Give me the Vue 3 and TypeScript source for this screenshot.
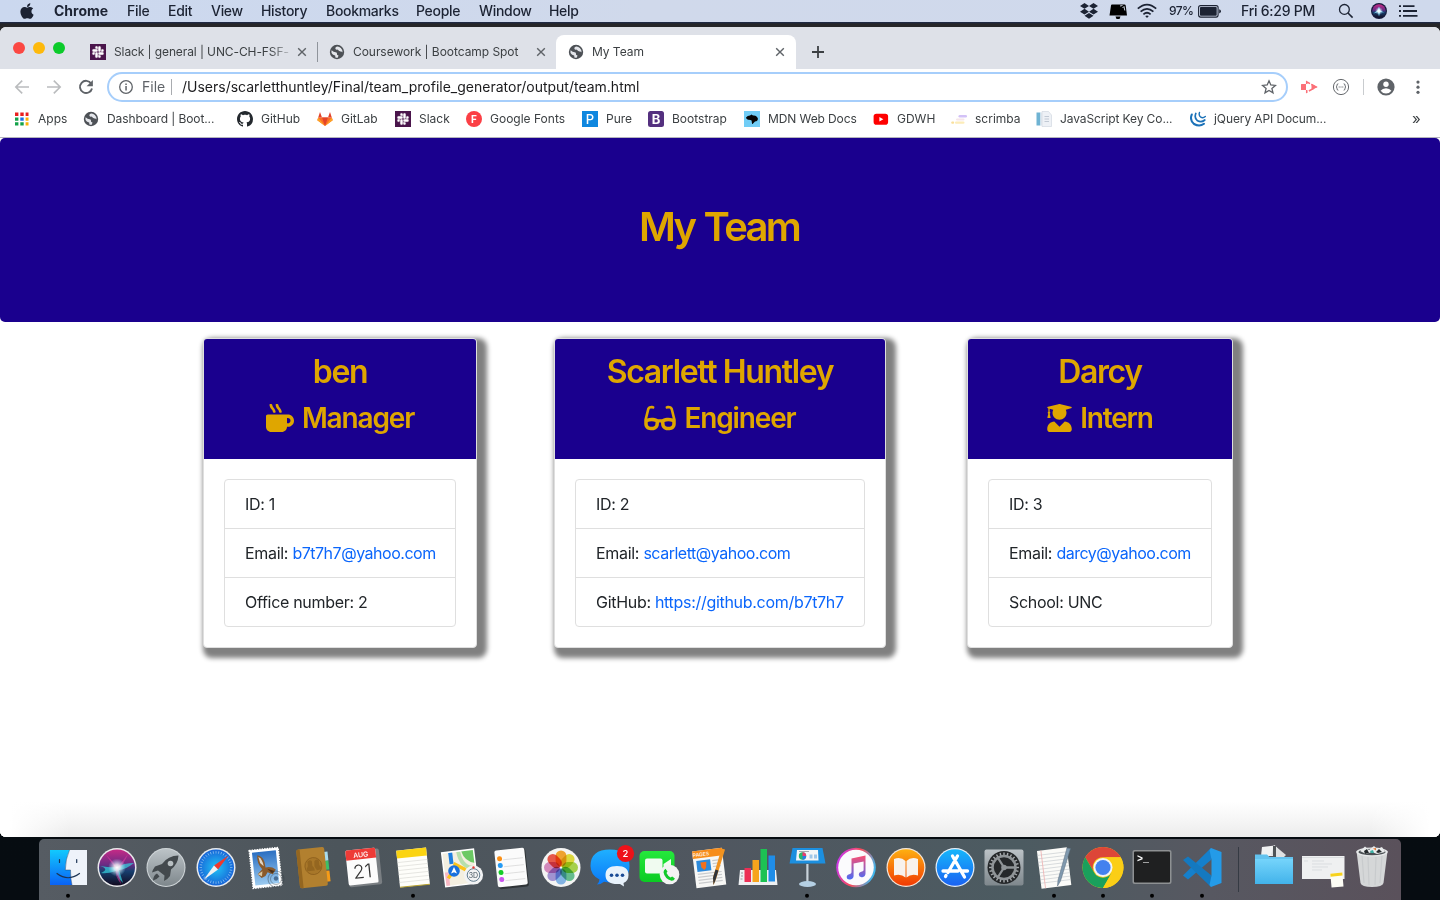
<script setup lang="ts">
interface Row {
  label: string
  value: string
  link?: boolean
}
interface Member {
  key: string
  name: string
  role: string
  viewBox: string
  icon: string
  rows: Row[]
}
interface Entry {
  key: string
  label: string
}

const menus: string[] = ['Chrome', 'File', 'Edit', 'View', 'History', 'Bookmarks', 'People', 'Window', 'Help']

const bookmarks: Entry[] = [
  { key: 'apps', label: 'Apps' },
  { key: 'globe', label: 'Dashboard | Boot...' },
  { key: 'github', label: 'GitHub' },
  { key: 'gitlab', label: 'GitLab' },
  { key: 'slack', label: 'Slack' },
  { key: 'fonts', label: 'Google Fonts' },
  { key: 'pure', label: 'Pure' },
  { key: 'bootstrap', label: 'Bootstrap' },
  { key: 'mdn', label: 'MDN Web Docs' },
  { key: 'youtube', label: 'GDWH' },
  { key: 'scrimba', label: 'scrimba' },
  { key: 'jskey', label: 'JavaScript Key Co...' },
  { key: 'jquery', label: 'jQuery API Docum...' },
]

const members: Member[] = [
  {
    key: 'manager',
    name: 'ben',
    role: 'Manager',
    viewBox: '0 0 512 512',
    icon: 'M127.1 146.5c1.3 7.7 8 13.5 16 13.5h16.5c9.8 0 17.6-8.5 16.3-18-3.8-28.2-16.4-54.2-36.6-74.7-14.4-14.7-23.6-33.3-26.4-53.5C111.8 5.9 105 0 96.8 0H80.4C70.6 0 63 8.5 64.1 18c3.9 31.9 18 61.3 40.6 84.4 12 12.2 19.7 27.5 22.4 44.1zm112 0c1.3 7.7 8 13.5 16 13.5h16.5c9.8 0 17.6-8.5 16.3-18-3.8-28.2-16.4-54.2-36.6-74.7-14.4-14.7-23.6-33.3-26.4-53.5C223.8 5.9 217 0 208.8 0h-16.4c-9.8 0-17.5 8.5-16.3 18 3.9 31.9 18 61.3 40.6 84.4 12 12.2 19.7 27.5 22.4 44.1zM400 192H32c-17.7 0-32 14.3-32 32v192c0 53 43 96 96 96h192c53 0 96-43 96-96h16c61.8 0 112-50.2 112-112s-50.2-112-112-112zm0 160h-16v-96h16c26.5 0 48 21.5 48 48s-21.5 48-48 48z',
    rows: [
      { label: 'ID:', value: '1' },
      { label: 'Email:', value: 'b7t7h7@yahoo.com', link: true },
      { label: 'Office number:', value: '2' },
    ],
  },
  {
    key: 'engineer',
    name: 'Scarlett Huntley',
    role: 'Engineer',
    viewBox: '0 0 576 512',
    icon: 'M574.1 280.37L528.75 98.66c-5.91-23.7-21.59-44.05-43-55.81-21.44-11.73-46.97-14.11-70.19-6.33l-15.25 5.08c-8.39 2.79-12.92 11.86-10.12 20.24l5.06 15.18c2.79 8.38 11.85 12.91 20.23 10.12l13.18-4.39c10.87-3.62 23-3.57 33.16 1.73 10.29 5.37 17.57 14.56 20.37 25.82l38.46 153.82c-22.19-6.81-49.79-12.46-81.2-12.46-34.77 0-73.98 7.02-114.85 26.74h-73.18c-40.87-19.74-80.08-26.75-114.86-26.75-31.42 0-59.02 5.65-81.21 12.46l38.46-153.83c2.79-11.25 10.09-20.45 20.38-25.81 10.16-5.3 22.28-5.35 33.15-1.73l13.17 4.39c8.38 2.79 17.44-1.74 20.23-10.12l5.06-15.18c2.8-8.38-1.73-17.45-10.12-20.24l-15.25-5.08c-23.22-7.78-48.75-5.41-70.19 6.33-21.41 11.77-37.09 32.11-43 55.8L1.9 280.37A64.218 64.218 0 0 0 0 295.86v70.25C0 429.01 51.58 480 115.2 480h37.12c60.28 0 110.37-45.94 114.88-105.37l2.93-38.63h35.75l2.93 38.63C313.31 434.06 363.4 480 423.68 480h37.12c63.62 0 115.2-50.99 115.2-113.88v-70.25c0-5.23-.64-10.43-1.9-15.5zm-370.72 89.42c-1.97 25.91-24.4 46.21-51.06 46.21H115.2C86.97 416 64 393.62 64 366.11v-37.54c18.12-6.49 43.42-12.92 72.58-12.92 23.86 0 47.26 4.33 69.93 12.92l-3.13 41.22zM512 366.12c0 27.51-22.97 49.88-51.2 49.88h-37.12c-26.67 0-49.1-20.3-51.06-46.21l-3.13-41.22c22.67-8.59 46.08-12.92 69.95-12.92 29.12 0 54.43 6.44 72.55 12.93v37.54z',
    rows: [
      { label: 'ID:', value: '2' },
      { label: 'Email:', value: 'scarlett@yahoo.com', link: true },
      { label: 'GitHub:', value: 'https://github.com/b7t7h7', link: true },
    ],
  },
  {
    key: 'intern',
    name: 'Darcy',
    role: 'Intern',
    viewBox: '0 0 448 512',
    icon: 'M319.4 320.6L224 416l-95.4-95.4C57.1 323.7 0 382.2 0 454.4v9.6c0 26.5 21.5 48 48 48h352c26.5 0 48-21.5 48-48v-9.6c0-72.2-57.1-130.7-128.6-133.8zM13.6 79.8l6.4 1.5v58.4c-7 4.2-12 11.5-12 20.3 0 8.4 4.6 15.4 11.1 19.7L3.5 242c-1.7 6.9 2.1 14 7.6 14h41.8c5.5 0 9.3-7.1 7.6-14l-15.6-62.3C51.4 175.4 56 168.4 56 160c0-8.8-5-16.1-12-20.3V87.1l66 15.9c-8.6 17.2-14 36.4-14 57 0 70.7 57.3 128 128 128s128-57.3 128-128c0-20.6-5.3-39.8-14-57l96.3-23.2c18.2-4.4 18.2-27.1 0-31.5l-190.4-46c-13-3.1-26.7-3.1-39.7 0L13.6 48.2c-18.1 4.4-18.1 27.1 0 31.6z',
    rows: [
      { label: 'ID:', value: '3' },
      { label: 'Email:', value: 'darcy@yahoo.com', link: true },
      { label: 'School:', value: 'UNC' },
    ],
  },
]

const ticks: number[] = Array.from({ length: 36 }, (_, i) => i * 10)
const teeth: number[] = Array.from({ length: 24 }, (_, i) => i * 15)
const petals: { angle: number; color: string }[] = [
  { angle: 0, color: '#f9a01b' },
  { angle: 45, color: '#e4df2b' },
  { angle: 90, color: '#a5d63c' },
  { angle: 135, color: '#58bf8a' },
  { angle: 180, color: '#7bb4ee' },
  { angle: 225, color: '#9f8fd8' },
  { angle: 270, color: '#d884c0' },
  { angle: 315, color: '#f04a3c' },
]
</script>

<template>
  <div class="desktop">
    <svg class="defs" width="0" height="0" aria-hidden="true">
      <defs>
        <symbol id="globe" viewBox="0 0 16 16">
          <circle cx="8" cy="8" r="7.2" fill="#4d5156" />
          <path d="M2.6 6.2 Q4.6 8.2 6.6 8.2 Q8.4 8.3 8 10 Q7.6 11.2 9.4 11.2 L9 13.4 Q7.6 14 6.4 13.6 L6.2 11.4 Q2.8 10.6 2.4 8.2Z M8.6 2.4 Q6 2.8 6.4 4.8 Q7 6.2 8.8 5.6 Q9.6 7.4 11.4 7.4 Q13 7.2 13.6 8.6 Q13.8 5.6 11.8 3.9 Q10.4 2.6 8.6 2.4Z" fill="#e4e6eb" />
        </symbol>
        <symbol id="slack" viewBox="-5 -5 34 34">
          <rect x="-5" y="-5" width="34" height="34" fill="#4a154b" />
          <path fill="#fff" stroke="#fff" stroke-width=".5" d="M5.042 15.165a2.528 2.528 0 0 1-2.52 2.523A2.528 2.528 0 0 1 0 15.165a2.527 2.527 0 0 1 2.522-2.52h2.520v2.520zM6.313 15.165a2.527 2.527 0 0 1 2.521-2.520 2.527 2.527 0 0 1 2.521 2.520v6.313A2.528 2.528 0 0 1 8.834 24a2.528 2.528 0 0 1-2.521-2.522v-6.313zM8.834 5.042a2.528 2.528 0 0 1-2.521-2.520A2.528 2.528 0 0 1 8.834 0a2.528 2.528 0 0 1 2.521 2.522v2.520H8.834zM8.834 6.313a2.528 2.528 0 0 1 2.521 2.521 2.528 2.528 0 0 1-2.521 2.521H2.522A2.528 2.528 0 0 1 0 8.834a2.528 2.528 0 0 1 2.522-2.521h6.312zM18.956 8.834a2.528 2.528 0 0 1 2.522-2.521A2.528 2.528 0 0 1 24 8.834a2.528 2.528 0 0 1-2.522 2.521h-2.522V8.834zM17.688 8.834a2.528 2.528 0 0 1-2.523 2.521 2.527 2.527 0 0 1-2.520-2.521V2.522A2.527 2.527 0 0 1 15.165 0a2.528 2.528 0 0 1 2.523 2.522v6.312zM15.165 18.956a2.528 2.528 0 0 1 2.523 2.522A2.528 2.528 0 0 1 15.165 24a2.527 2.527 0 0 1-2.520-2.522v-2.522h2.520zM15.165 17.688a2.527 2.527 0 0 1-2.520-2.523 2.526 2.526 0 0 1 2.520-2.520h6.313A2.527 2.527 0 0 1 24 15.165a2.528 2.528 0 0 1-2.522 2.523h-6.313z" />
        </symbol>
        <symbol id="close" viewBox="0 0 10 10">
          <path d="M1.2 1.2L8.8 8.8M8.8 1.2L1.2 8.8" stroke="#5f6368" stroke-width="1.4" />
        </symbol>
        <linearGradient id="gFinder" x1="0" y1="0" x2="0" y2="1"><stop offset="0" stop-color="#12c9fd" /><stop offset="1" stop-color="#0a62f5" /></linearGradient>
        <linearGradient id="gGrey" x1="0" y1="0" x2="0" y2="1"><stop offset="0" stop-color="#bcc3c7" /><stop offset="1" stop-color="#7e878c" /></linearGradient>
        <radialGradient id="gSafari"><stop offset="0" stop-color="#22c3f5" /><stop offset="1" stop-color="#1766d8" /></radialGradient>
        <linearGradient id="gSky" x1="0" y1="0" x2="0" y2="1"><stop offset="0" stop-color="#2b6fc2" /><stop offset="1" stop-color="#9ccbf0" /></linearGradient>
        <linearGradient id="gSiri" x1="0" y1="0" x2="0" y2="1"><stop offset="0" stop-color="#c62a86" /><stop offset=".42" stop-color="#6a2b84" /><stop offset=".6" stop-color="#173f6e" /><stop offset="1" stop-color="#120a20" /></linearGradient>
        <radialGradient id="gGlow"><stop offset="0" stop-color="#fff" /><stop offset=".35" stop-color="#fff" stop-opacity=".75" /><stop offset="1" stop-color="#9fe8ff" stop-opacity="0" /></radialGradient>
        <linearGradient id="gBubble" x1="0" y1="0" x2="0" y2="1"><stop offset="0" stop-color="#1fb0ff" /><stop offset="1" stop-color="#0a78f8" /></linearGradient>
        <linearGradient id="gGreen" x1="0" y1="0" x2="0" y2="1"><stop offset="0" stop-color="#25e83c" /><stop offset="1" stop-color="#0bcb23" /></linearGradient>
        <linearGradient id="gBooks" x1="0" y1="0" x2="0" y2="1"><stop offset="0" stop-color="#feb010" /><stop offset="1" stop-color="#f13a04" /></linearGradient>
        <linearGradient id="gStore" x1="0" y1="0" x2="0" y2="1"><stop offset="0" stop-color="#16b6fb" /><stop offset="1" stop-color="#1a62f2" /></linearGradient>
        <linearGradient id="gNote" x1="0" y1="0" x2="0" y2="1"><stop offset="0" stop-color="#fb4e72" /><stop offset="1" stop-color="#4b6cf5" /></linearGradient>
        <linearGradient id="gRing" x1="0" y1=".3" x2="1" y2=".6"><stop offset="0" stop-color="#c536f6" /><stop offset=".5" stop-color="#fb4a58" /><stop offset="1" stop-color="#34bff8" /></linearGradient>
        <linearGradient id="gFolder" x1="0" y1="0" x2="0" y2="1"><stop offset="0" stop-color="#75d4fb" /><stop offset="1" stop-color="#42b3ea" /></linearGradient>
      </defs>
    </svg>

    <header class="menubar">
      <svg class="apple" viewBox="0 0 384 512"><path fill="#1c2333" d="M318.7 268.7c-.2-36.7 16.4-64.4 50-84.8-18.8-26.9-47.2-41.7-84.7-44.6-35.5-2.8-74.3 20.7-88.5 20.7-15 0-49.4-19.7-76.4-19.7C63.3 141.2 4 184.8 4 273.5q0 39.3 14.4 81.2c12.8 36.7 59 126.7 107.2 125.2 25.2-.6 43-17.9 75.8-17.9 31.8 0 48.3 17.9 76.4 17.9 48.6-.7 90.4-82.5 102.6-119.3-65.2-30.7-61.7-90-61.7-91.9zm-56.6-164.2c27.3-32.4 24.8-61.9 24-72.5-24.1 1.4-52 16.4-67.9 34.9-17.5 19.8-27.8 44.3-25.6 71.9 26.1 2 49.9-11.4 69.5-34.3z" /></svg>
      <nav class="menus">
        <span v-for="m in menus" :key="m">{{ m }}</span>
      </nav>
      <div class="status">
        <svg width="20" height="18" viewBox="0 0 20 18" fill="#1c2333"><path d="M5.5 1l4.5 2.9L5.5 6.8 1 3.9zM14.5 1L19 3.9l-4.5 2.9L10 3.9zM5.5 6.8L10 9.7l-4.500 2.900L1 9.700zM14.500 6.800L19 9.700l-4.500 2.900L10 9.700zM10 10.900l4.500 2.900L10 16.700l-4.500-2.900z" /></svg>
        <svg width="20" height="18" viewBox="0 0 20 18"><path d="M4 2.500H16.500Q17.500 2.500 17.700 3.500L19 13.500H1.500L3 3.500Q3.100 2.500 4 2.500Z M7.500 14.500H12.500L11.500 17H8.500Z" fill="#000" /><path d="M12 4l2.500-.5M14.500 6l1.500-1.500 .8 4" stroke="#dfe6f2" stroke-width=".9" fill="none" /></svg>
        <svg width="20" height="16" viewBox="0 0 20 16" fill="none" stroke="#1c2333" stroke-width="1.700"><path d="M.8 5.700Q10-2.500 19.200 5.700M3.600 8.600Q10 3 16.400 8.600M6.400 11.300Q10 8.200 13.600 11.300" /><path d="M8.200 13.100Q10 11.700 11.800 13.100L10 15z" fill="#1c2333" stroke="none" /></svg>
        <span class="pct">97%</span>
        <svg width="24" height="13" viewBox="0 0 24 13"><rect x=".6" y=".6" width="19.500" height="11.500" rx="2" fill="none" stroke="#1c2333" stroke-width="1.100" /><rect x="2" y="2" width="16.700" height="8.700" rx=".8" fill="#1c2333" /><path d="M21.200 4.200Q23 4.800 23 6.300T21.200 8.500z" fill="#1c2333" /></svg>
        <span class="clock">Fri 6:29 PM</span>
        <svg width="16" height="16" viewBox="0 0 16 16" fill="none" stroke="#1c2333"><circle cx="6.400" cy="6.400" r="4.900" stroke-width="1.300" /><path d="M10 10l4.600 4.600" stroke-width="1.600" /></svg>
        <svg width="16" height="16" viewBox="0 0 16 16"><circle cx="8" cy="8" r="8" fill="#151a3c" /><circle cx="8" cy="8" r="6.800" fill="url(#gSiri)" /><path d="M8 3.500L9.300 7.500 13 9.500 9 9 8 13.500 7 9 2.500 10.500 6.500 7.500Z" fill="#7fd8f5" /><circle cx="8" cy="8" r="4" fill="url(#gGlow)" /></svg>
        <svg width="19" height="12" viewBox="0 0 19 12" fill="#1c2333"><path d="M0 .3h2v1.800H0zM4 .3h11.500v1.800H4zM0 5.100h2v1.800H0zM4 5.100h14v1.800H4zM0 9.900h2v1.800H0zM4 9.900h14.500v1.800H4z" /></svg>
      </div>
    </header>

    <main class="window">
      <div class="tabstrip">
        <div class="lights"><i class="red"></i><i class="amber"></i><i class="green"></i></div>
        <div class="tab first">
          <svg width="16" height="16"><use href="#slack" /></svg>
          <span class="title fade">Slack | general | UNC-CH-FSF-</span>
          <svg class="x" width="10" height="10"><use href="#close" /></svg>
        </div>
        <div class="tab second">
          <svg width="16" height="16"><use href="#globe" /></svg>
          <span class="title">Coursework | Bootcamp Spot</span>
          <svg class="x" width="10" height="10"><use href="#close" /></svg>
        </div>
        <div class="tab active">
          <svg width="16" height="16"><use href="#globe" /></svg>
          <span class="title">My Team</span>
          <svg class="x" width="10" height="10"><use href="#close" /></svg>
        </div>
        <svg class="plus" width="12" height="12" viewBox="0 0 12 12"><path d="M6 0V12M0 6H12" stroke="#3c4043" stroke-width="1.800" /></svg>
      </div>

      <div class="toolbar">
        <svg width="16" height="16" viewBox="0 0 16 16" fill="none" stroke="#babcbe" stroke-width="1.600"><path d="M15 8H2M8.200 1.600L1.800 8l6.400 6.400" /></svg>
        <svg width="16" height="16" viewBox="0 0 16 16" fill="none" stroke="#babcbe" stroke-width="1.600"><path d="M1 8H14M7.800 1.600L14.200 8l-6.400 6.400" /></svg>
        <svg width="16" height="16" viewBox="0 0 16 16"><path d="M13.200 4.600A6.100 6.100 0 1 0 14 9.400" fill="none" stroke="#5f6368" stroke-width="1.900" /><path d="M14.900 1v6.300H8.600z" fill="#5f6368" /></svg>
        <div class="omnibox">
          <svg width="16" height="16" viewBox="0 0 16 16"><circle cx="8" cy="8" r="6.300" fill="none" stroke="#5f6368" stroke-width="1.300" /><path d="M7.300 4.500h1.500V6H7.300zM7.300 7.100h1.500v4.300H7.300z" fill="#5f6368" /></svg>
          <span class="scheme">File</span>
          <i class="bar"></i>
          <span class="url">/Users/scarletthuntley/Final/team_profile_generator/output/team.html</span>
          <svg class="star" width="16" height="16" viewBox="0 0 16 16"><path d="M8 1.800l1.800 4.200 4.600.4-3.500 3 1.100 4.500L8 11.500 4 13.900l1.100-4.500-3.500-3 4.600-.4z" fill="none" stroke="#5f6368" stroke-width="1.300" /></svg>
        </div>
        <svg class="ext1" width="18" height="14" viewBox="0 0 18 14"><path d="M1.500 4H6V10H1.500Q1 10 1 9.500V4.500Q1 4 1.500 4Z" fill="#fb7078" /><path d="M6.700 4V1.800L16 7l-9.300 5.200V10" fill="none" stroke="#fb7078" stroke-width="1.500" stroke-dasharray="6 1.500" /><path d="M11.500 3.800L17.500 7 11.500 10.200z" fill="#fb7078" /></svg>
        <svg class="ext2" width="18" height="18" viewBox="0 0 18 18"><circle cx="9" cy="9" r="7.600" fill="none" stroke="#66696d" /><path d="M6.300 5.800Q5 5.800 5 7.200T4 9Q5 9 5 10.600T6.300 12.200M11.700 5.800Q13 5.800 13 7.200T14 9Q13 9 13 10.600T11.700 12.200" fill="none" stroke="#5f6368" stroke-width="1" /><path d="M6.700 9H11.400" stroke="#5f6368" stroke-dasharray="1 .8" /></svg>
        <i class="divider"></i>
        <svg class="avatar" width="18" height="18" viewBox="0 0 18 18"><circle cx="9" cy="9" r="8.600" fill="#5f6368" /><circle cx="9" cy="6.300" r="2.700" fill="#fff" /><path d="M3.600 12.800Q5.500 10.300 9 10.300T14.400 12.800Q12.500 15.600 9 15.600T3.600 12.800Z" fill="#fff" /></svg>
        <svg class="kebab" width="6" height="16" viewBox="0 0 6 16" fill="#5f6368"><circle cx="3" cy="3.100" r="1.600" /><circle cx="3" cy="8.200" r="1.600" /><circle cx="3" cy="13.300" r="1.600" /></svg>
      </div>

      <div class="bookmarks">
        <span v-for="b in bookmarks" :key="b.key" class="bookmark" :class="b.key">
          <svg v-if="b.key === 'apps'" width="16" height="16" viewBox="0 0 16 16">
            <path d="M1 1.500h3.400v3.400H1zM6.300 1.500h3.400v3.400H6.300zM11.600 1.500h2.900v3.400h-2.900z" fill="#ea1f1f" />
            <path d="M1 6.500h3.400v3.200H1z" fill="#14a24a" /><path d="M6.300 6.500h3.400v3.200H6.300z" fill="#1a73e8" /><path d="M11.600 6.500h2.900v3.200h-2.900z" fill="#fbb105" />
            <path d="M1 11.300h3.400v3.200H1zM6.300 11.300h3.400v3.200H6.300z" fill="#14a24a" /><path d="M11.600 11.300h2.900v3.200h-2.900z" fill="#fbb105" />
          </svg>
          <svg v-else-if="b.key === 'globe'" width="16" height="16"><use href="#globe" /></svg>
          <svg v-else-if="b.key === 'github'" width="16" height="16" viewBox="0 0 16 16"><path fill="#24292e" d="M8 0C3.580 0 0 3.580 0 8c0 3.540 2.290 6.530 5.470 7.590.4.070.55-.17.55-.38 0-.19-.01-.82-.01-1.490-2.010.37-2.530-.49-2.690-.94-.09-.23-.48-.94-.82-1.130-.28-.15-.68-.52-.01-.53.63-.01 1.080.58 1.230.82.72 1.210 1.870.87 2.330.66.07-.52.28-.87.51-1.070-1.780-.2-3.640-.89-3.640-3.950 0-.87.31-1.590.82-2.150-.08-.2-.36-1.020.08-2.120 0 0 .67-.21 2.200.82.64-.18 1.320-.27 2-.27s1.360.09 2 .27c1.530-1.040 2.200-.82 2.200-.82.44 1.100.16 1.920.08 2.120.51.56.82 1.270.82 2.150 0 3.070-1.870 3.750-3.650 3.950.29.25.54.73.54 1.480 0 1.070-.01 1.930-.01 2.200 0 .21.15.46.55.38A8.010 8.010 0 0 0 16 8c0-4.420-3.580-8-8-8z" /></svg>
          <svg v-else-if="b.key === 'gitlab'" width="16" height="16" viewBox="0 0 16 16"><path d="M8 15L.3 9.300 1.200 6.500H14.800L15.700 9.300Z" fill="#fc6d26" /><path d="M8 15L1.200 6.500.3 9.300zM8 15l6.800-8.500.9 2.800z" fill="#fca326" /><path d="M1.200 6.500L3 1 5 6.500zM14.800 6.500L13 1 11 6.500zM8 15L5 6.500h6z" fill="#e24329" /></svg>
          <svg v-else-if="b.key === 'slack'" width="16" height="16"><use href="#slack" /></svg>
          <svg v-else-if="b.key === 'fonts'" width="16" height="16" viewBox="0 0 16 16"><circle cx="8" cy="8" r="8" fill="#fb3f45" /><text x="8" y="11.700" class="glyph" font-size="10">F</text></svg>
          <svg v-else-if="b.key === 'pure'" width="16" height="16" viewBox="0 0 16 16"><rect width="16" height="16" fill="#0f87df" /><text x="8" y="12.500" class="glyph light" font-size="13">P</text></svg>
          <svg v-else-if="b.key === 'bootstrap'" width="16" height="16" viewBox="0 0 16 16"><rect width="16" height="16" rx="2.500" fill="#54307f" /><text x="8" y="12.500" class="glyph" font-size="13">B</text></svg>
          <svg v-else-if="b.key === 'mdn'" width="16" height="16" viewBox="0 0 16 16"><rect width="16" height="16" fill="#71cdf6" /><path d="M2 6.500Q3.500 4.500 6 4.500L7.500 3.500 9 4.500Q13 4 14 8 13.500 10.500 11 10.500L8.800 12.800Q8.300 13.500 8 12.500L7.600 9.500Q6 8.500 4 8.800 2 8 2 6.500Z" fill="#050505" /></svg>
          <svg v-else-if="b.key === 'youtube'" width="16" height="16" viewBox="0 0 16 16"><rect x=".6" y="2.700" width="14.500" height="11" rx="2.800" fill="#fe0000" /><path d="M6.400 5.900L10.300 8.200 6.400 10.500z" fill="#fff" /></svg>
          <svg v-else-if="b.key === 'scrimba'" width="16" height="16" viewBox="0 0 16 16"><rect x="7.500" y="4" width="8.500" height="2.600" rx="1.300" fill="#d3c2f7" /><rect x="5" y="7.500" width="8.500" height="2" rx="1" fill="#f6e6ea" /><rect x=".2" y="10.500" width="3" height="2.300" rx="1.100" fill="#f9df9c" /><rect x="4" y="10.500" width="9.500" height="2.300" rx="1.100" fill="#fcecb9" /></svg>
          <svg v-else-if="b.key === 'jskey'" width="16" height="16" viewBox="0 0 16 16"><path d="M.5 1.500h4v13H.5z" fill="#6fb3d3" /><path d="M4.500 1.500H7v13H4.500z" fill="#e3eaf1" /><path d="M6 .5h6.500L15.500 4v11.500H6z" fill="#eef1f6" stroke="#cdd4de" stroke-width=".6" /><path d="M8.500 5.500H13M8.500 8H13M8.500 10.500H13" stroke="#b5bfcb" stroke-width=".8" /></svg>
          <svg v-else width="16" height="16" viewBox="0 0 16 16" fill="none" stroke="#1c72b8" stroke-linecap="round"><path d="M1.800 3.500Q-.6 9 4 13 9.500 16 14 12.800" stroke-width="2" /><path d="M5.800 2.500Q4 7 7.500 9.800 11.500 12 14.800 9" stroke-width="1.700" /><path d="M9.500 1.500Q8.400 4.500 10.800 6.200 13 7.500 15.300 5.500" stroke-width="1.400" /></svg>
          <span>{{ b.label }}</span>
        </span>
        <span class="more">»</span>
      </div>

      <section class="page">
        <div class="hero"><h1>My Team</h1></div>
        <div class="cards">
          <article v-for="m in members" :key="m.key" class="card" :class="m.key">
            <div class="card-head">
              <h2>{{ m.name }}</h2>
              <h3>
                <svg class="role" :class="m.key" :viewBox="m.viewBox"><path :d="m.icon" fill="#dfa600" /></svg>
                <span>{{ m.role }}</span>
              </h3>
            </div>
            <ul>
              <li v-for="r in m.rows" :key="r.label">
                {{ r.label }} <a v-if="r.link" :class="{ mail: r.label === 'Email:' }">{{ r.value }}</a><template v-else>{{ r.value }}</template>
              </li>
            </ul>
          </article>
        </div>
      </section>
    </main>

    <footer class="dock-area">
      <div class="dock">
        <!-- Finder -->
        <svg class="app" viewBox="0 0 50 61">
          <path d="M7 11H44V46H7z" fill="#eef3fa" />
          <path d="M7 11H26.500Q22.500 20 22.300 31H27.500Q27.500 40 29 46H7z" fill="url(#gFinder)" />
          <path d="M26.500 11Q22.500 20 22.300 31H27.500Q27.500 40 29 46" fill="none" stroke="#1c3454" stroke-width=".6" opacity=".7" /><path d="M14 34.500Q25 43 36.500 34.500M16.500 20.500V23.500M33.700 20.500V23.500" fill="none" stroke="#1c3454" stroke-width="1.200" stroke-linecap="round" />
          <circle cx="25" cy="56.800" r="2" fill="#000" />
        </svg>
        <!-- Siri -->
        <svg class="app" viewBox="0 0 50 61">
          <circle cx="25" cy="28.500" r="19.500" fill="#e9eaec" /><circle cx="25" cy="28.500" r="18" fill="url(#gSiri)" />
          <path d="M8 27Q20 29 25 28 32 24 42 24 33 31 27 31L31 44Q25 38 24 32 15 35 9 34 18 30 8 27Z" fill="#35c8d8" opacity=".75" />
          <path d="M14 16Q23 24 25 29L36 15Q31 27 26 30L29 45Q22 36 24 30Z" fill="#e83fa5" opacity=".5" />
          <circle cx="25" cy="28.500" r="9" fill="url(#gGlow)" />
        </svg>
        <!-- Launchpad -->
        <svg class="app" viewBox="0 0 50 61">
          <circle cx="25" cy="28.500" r="19.500" fill="#cfd5d8" /><circle cx="25" cy="28.500" r="18.500" fill="url(#gGrey)" />
          <path d="M37.500 16.500Q27 16.500 21 25L14 27.500Q11.500 31 11 33.500L17 31.500 23.500 36.500 23 42Q27 40 29 37L30 30.500Q37 25 37.500 16.500ZM16 34.500Q12.500 36 12 41.500 16 40.500 18.500 37.500Z" fill="#43494d" /><circle cx="29.500" cy="24.500" r="2.800" fill="#b8bfc2" />
        </svg>
        <!-- Safari -->
        <svg class="app" viewBox="0 0 50 61">
          <circle cx="25" cy="28.500" r="19.500" fill="#e8ebee" /><circle cx="25" cy="28.500" r="18" fill="url(#gSafari)" />
          <path v-for="t in ticks" :key="t" d="M25 12V14.500" stroke="#c3e4fb" stroke-width=".5" :transform="`rotate(${t} 25 28.500)`" />
          <path d="M37.500 16.500L23 26.500 27 30.500Z" fill="#f0382c" /><path d="M12.500 41L23 26.500 27 30.500Z" fill="#f1f1f1" />
        </svg>
        <!-- Mail -->
        <svg class="app" viewBox="0 0 50 61">
          <g transform="rotate(-6 25 28)">
            <rect x="11" y="10" width="29" height="38" fill="#fff" stroke="#fff" stroke-width="1.500" stroke-dasharray="1.500 1" /><rect x="13.500" y="12.500" width="24" height="33" fill="url(#gSky)" />
            <path d="M18.500 15.500Q24 17 25 23L25.500 28.500Q31 27.500 35.500 31.500L32 36 27 33.500 24.500 37 20.500 38.500 17 34.500 22 30Q17 23 18.500 15.500Z" fill="#8a5a2b" /><path d="M19.500 17Q23.500 20 23.800 27L20.500 23.500Z" fill="#e0d5c6" /><path d="M27 30L34 33 31.500 35Z" fill="#4e2f14" /><path d="M17 34.500L22 32 21 37Z" fill="#d8c49e" />
          </g>
          <circle cx="36" cy="40" r="8" fill="none" stroke="#353e46" stroke-width="1.100" opacity=".4" /><circle cx="36" cy="40" r="5.500" fill="none" stroke="#353e46" opacity=".4" /><circle cx="36" cy="39.500" r="2.200" fill="#2c4c70" opacity=".7" />
        </svg>
        <!-- Contacts -->
        <svg class="app" viewBox="0 0 50 61">
          <g transform="rotate(-6 25 28)">
            <rect x="36" y="14" width="4" height="9" fill="#a9dcee" /><rect x="36" y="23" width="4" height="9" fill="#3fbf67" /><rect x="36" y="33" width="4" height="11" fill="#f59b18" />
            <rect x="9" y="9" width="28" height="39" rx="2" fill="#b2802f" /><path d="M9 11V46Q9 48 11 48H12.500V9H11Q9 9 9 11Z" fill="#946620" />
            <circle cx="24.500" cy="27" r="8.500" fill="#a87729" stroke="#86591a" stroke-width=".7" /><path d="M19 22q2.500-2.500 4.500 0v4.500q2 2 2 5h-7.500q-1-3 1-5zM26 22q2.500-2.500 4.500 0v4.500q2 2 1.500 4.500l-4.500.5-2-4z" fill="#946620" />
          </g>
        </svg>
        <!-- Calendar -->
        <svg class="app" viewBox="0 0 50 61">
          <g transform="rotate(-6 25 28)">
            <rect x="9.500" y="11" width="33" height="36" rx="2" fill="#7a7f83" /><rect x="9" y="10" width="30" height="35" rx="1.500" fill="#fcfcfc" /><path d="M10.500 10H37.500Q39 10 39 11.500V20H9V11.500Q9 10 10.500 10Z" fill="#ee3b37" />
            <text x="24" y="18" class="glyph light" font-size="7">AUG</text><text x="24" y="39" class="day" font-size="19">21</text>
          </g>
        </svg>
        <!-- Stickies -->
        <svg class="app" viewBox="0 0 50 61">
          <g transform="rotate(-6 25 28)"><rect x="10" y="10" width="30" height="37" fill="#fefefa" /><rect x="10" y="10" width="30" height="8" fill="#fbd411" /><path d="M10 22H40M10 26H40M10 30H40M10 34H40M10 38H40M10 42H40" stroke="#d7d7d2" stroke-width=".6" /><path d="M10 46.800H40" stroke="#b8a22f" /></g>
          <circle cx="25" cy="56.800" r="2" fill="#000" />
        </svg>
        <!-- Maps -->
        <svg class="app" viewBox="0 0 50 61">
          <g transform="rotate(-7 22 28)">
            <rect x="6.500" y="12" width="32" height="34" fill="#f4efe0" /><path d="M26 12H38.500V26Q28 23 26 12Z" fill="#6cc964" /><path d="M6.500 32H11V46H6.500z" fill="#f8b9c4" /><path d="M23 12Q24 30 38.500 31" fill="none" stroke="#b7dfac" stroke-width="4" /><path d="M15 12V24" stroke="#1e7fe0" stroke-width="4" /><path d="M17 24L38 38M17 30L10 38" stroke="#fbc31c" stroke-width="3.500" /><rect x="6.500" y="12" width="32" height="34" fill="none" stroke="#fff" stroke-width="1.500" />
          </g>
          <circle cx="17" cy="32" r="5.800" fill="#1870dd" /><path d="M17 28l3 6.500-3-1.300-3 1.300z" fill="#fff" />
          <circle cx="36.500" cy="36" r="9.600" fill="#f2f3f4" /><circle cx="36.500" cy="36" r="6.300" fill="none" stroke="#547083" stroke-width=".9" /><text x="36.500" y="38.500" class="three" font-size="7">3D</text><circle cx="36.500" cy="28.500" r="1.200" fill="#e63931" />
        </svg>
        <!-- Reminders -->
        <svg class="app" viewBox="0 0 50 61">
          <g transform="rotate(-6 25 28)"><rect x="11" y="11" width="30" height="38" rx="2" fill="#2f3437" /><rect x="10" y="10" width="30" height="37" rx="2" fill="#fbfbfb" /><path d="M18 20H38M18 27H38M18 34H38M18 41H38" stroke="#d5d5d5" stroke-width=".7" /><circle cx="14.500" cy="18.500" r="2.500" fill="#fb8f15" /><circle cx="14.500" cy="25.500" r="2.500" fill="#259bf4" /><circle cx="14.500" cy="32.500" r="2.500" fill="#14cc27" /><circle cx="14.500" cy="39.500" r="2.500" fill="#ca54ee" /></g>
        </svg>
        <!-- Photos -->
        <svg class="app" viewBox="0 0 50 61">
          <circle cx="25" cy="28.500" r="19.500" fill="#f4f4f3" />
          <rect v-for="p in petals" :key="p.angle" class="petal" x="19.600" y="11.500" width="10.800" height="16" rx="5.400" :fill="p.color" :transform="`rotate(${p.angle} 25 28.500)`" />
        </svg>
        <!-- Messages -->
        <svg class="app" viewBox="0 0 50 61">
          <path d="M25 10.500Q44.500 10.500 44.500 27T25 43.500Q22 43.500 19 42.800 16 45.500 12 45.500 14.500 43 14.500 40.500 5.500 36 5.500 27 5.500 10.500 25 10.500Z" fill="url(#gBubble)" /><path d="M32 27Q43.500 27 43.500 36 43.500 42 38.500 44L39 47.500 35 45Q20.500 46 20.500 36 20.500 27 32 27Z" fill="#e8f2fb" /><circle cx="26.500" cy="36.300" r="1.800" fill="#1a4b96" /><circle cx="32" cy="36.300" r="1.800" fill="#1a4b96" /><circle cx="37.500" cy="36.300" r="1.800" fill="#1a4b96" />
          <circle cx="40.500" cy="14.500" r="8.600" fill="#ee1219" /><text x="40.500" y="17.900" class="glyph light" font-size="9.500">2</text>
        </svg>
        <!-- FaceTime -->
        <svg class="app" viewBox="0 0 50 61">
          <rect x="5.500" y="12" width="35" height="31" rx="5" fill="url(#gGreen)" /><rect x="11" y="19.500" width="17.500" height="15" rx="2" fill="#f0fbf0" /><path d="M29.500 25L37 20V33L29.500 29Z" fill="#f0fbf0" /><circle cx="35.500" cy="35.500" r="9.800" fill="#f3f3f3" /><path d="M31.500 29.800l2 2.700-1 1.600q1.500 3 4 4.500l1.700-1 2.700 2q-.9 2.400-3.400 2.200-7-2.200-8-8.500.1-2.500 2-3.500z" fill="#12c92a" />
        </svg>
        <!-- Pages -->
        <svg class="app" viewBox="0 0 50 61">
          <g transform="rotate(-7 25 28)"><rect x="10" y="10.500" width="30" height="37" fill="#f7f7f5" /><rect x="10" y="10.500" width="30" height="7.500" fill="#f78d1b" /><text x="18.500" y="16.300" class="glyph light" font-size="5">PAGES</text><rect x="13" y="20.500" width="14" height="11" fill="#2c8adb" /><path d="M17 22.500h6l-1 6-2 2-2.500-3z" fill="#f3701d" /><path d="M29 22H37M29 25H37M29 28H37M13 34H37M13 37H37M13 40H37M13 43H37" stroke="#c9cbcd" stroke-width="1.200" /></g>
          <path d="M37.500 9.500L41 10.500 32 40 29.500 46 29 38.500Z" fill="#f19320" /><path d="M31.500 30.500L34.500 31.500 31.500 41 29.500 46 29 38.500Z" fill="#30343a" />
        </svg>
        <!-- Numbers -->
        <svg class="app" viewBox="0 0 50 61">
          <path d="M7 31H43L44.500 46H5.500Z" fill="#eef0f2" /><path d="M8 34H10M8 37H10M7.500 40H9.500" stroke="#8b9196" stroke-width=".9" /><rect x="11.500" y="29" width="6.500" height="14" fill="#ec2f55" /><rect x="19.500" y="21" width="6.500" height="22" fill="#f7a41d" /><rect x="27.500" y="10" width="6.500" height="33" fill="#1dc253" /><rect x="35.500" y="16.500" width="6.500" height="26" fill="#1f8de8" />
        </svg>
        <!-- Keynote -->
        <svg class="app" viewBox="0 0 50 61">
          <path d="M24.300 25H26.500V44H24.300z" fill="#c9d3da" /><ellipse cx="25.500" cy="45" rx="8.500" ry="3" fill="#b5d0e4" /><path d="M10.500 9H40.500L43.500 24.500H7.500z" fill="#1c8fdf" /><path d="M15 11H36L36.500 21.500H14z" fill="#f4f6f7" /><circle cx="20.500" cy="17" r="3.700" fill="#2bb86b" /><path d="M20.500 17V13.300A3.700 3.700 0 0 1 24.200 17z" fill="#e93b71" /><path d="M20.500 17H24.200A3.700 3.700 0 0 1 20.500 20.700z" fill="#2a7de0" /><path d="M27.500 15.500h3v4h-3zM32 15.500h3v4h-3z" fill="#9fc6e8" /><path d="M17 12.500H27" stroke="#6d7479" stroke-width=".6" /><circle cx="25" cy="56.800" r="2" fill="#000" />
        </svg>
        <!-- iTunes -->
        <svg class="app" viewBox="0 0 50 61">
          <circle cx="25" cy="28.500" r="19.800" fill="url(#gRing)" /><circle cx="25" cy="28.500" r="17.800" fill="#fbfbfd" /><path d="M20.500 19.500L34.500 16.500V34.500Q34.500 37.500 31.300 38.200 28 38.500 27.800 35.800 27.900 33.200 31 32.600 32.600 32.200 32.600 31V22.500L22.600 24.600V37Q22.500 39.800 19.300 40.500 15.800 40.800 15.700 38 15.800 35.500 19 34.900 20.500 34.500 20.500 33.300Z" fill="url(#gNote)" />
        </svg>
        <!-- iBooks -->
        <svg class="app" viewBox="0 0 50 61">
          <circle cx="25" cy="28.500" r="19.500" fill="#f4e6da" /><circle cx="25" cy="28.500" r="18.300" fill="url(#gBooks)" /><path d="M24.500 22Q20 17.500 13 20V36.500Q20 34.500 24.500 38.500zM25.500 22Q30 17.500 37 20V36.500Q30 34.500 25.500 38.500z" fill="#f8f2ec" />
        </svg>
        <!-- App Store -->
        <svg class="app" viewBox="0 0 50 61">
          <circle cx="25" cy="28.500" r="19.500" fill="#e7eff8" /><circle cx="25" cy="28.500" r="18.300" fill="url(#gStore)" /><path d="M27.500 17L18 33.500M22.500 17L34.500 38M13 32H28M32 32H37.500M16 36.500L15.500 37.500" stroke="#fff" stroke-width="3.300" stroke-linecap="round" />
        </svg>
        <!-- System Preferences -->
        <svg class="app" viewBox="0 0 50 61">
          <rect x="5.500" y="10.500" width="39" height="36" rx="2" fill="url(#gGrey)" /><circle cx="25" cy="28.500" r="16.500" fill="#25282a" /><path v-for="t in teeth" :key="t" d="M25 13.500V17" stroke="#a7abae" stroke-width="1.400" :transform="`rotate(${t} 25 28.500)`" /><circle cx="25" cy="28.500" r="11.500" fill="none" stroke="#8f9497" stroke-width="2.500" /><path d="M25 28.500H36M25 28.500L19 19M25 28.500L19 38" stroke="#8f9497" stroke-width="2.300" /><circle cx="25" cy="28.500" r="2.800" fill="#8f9497" />
        </svg>
        <!-- TextEdit -->
        <svg class="app" viewBox="0 0 50 61">
          <g transform="rotate(-7 25 28)"><rect x="10" y="10" width="30" height="38" fill="#fbfbf8" /><path d="M10 14.500H40M10 18H40M10 21.500H40M10 25H40M10 28.500H40M10 32H40M10 35.500H40M10 39H40M10 42.500H40" stroke="#c2c8cc" stroke-width=".6" /><path d="M14 10V48" stroke="#efb2b2" stroke-width=".8" /></g><path d="M38 9L41.500 9.500 31.500 42 28.500 47 29 41Z" fill="#8099ae" stroke="#566b7d" stroke-width=".5" /><circle cx="25" cy="56.800" r="2" fill="#000" />
        </svg>
        <!-- Chrome -->
        <svg class="app" viewBox="0 0 50 61">
          <circle cx="25" cy="28.500" r="20.500" fill="#fbce16" /><path d="M7.250 18.250A20.500 20.500 0 0 1 42.750 18.250H25A10.250 10.250 0 0 0 16.100 33.600Z" fill="#dd4638" /><path d="M7.250 18.250A20.500 20.500 0 0 0 25 49L33.900 33.600A10.250 10.250 0 0 1 16.100 33.600Z" fill="#1aa05c" /><path d="M42.750 18.250A20.500 20.500 0 0 1 25 49L33.900 33.600A10.250 10.250 0 0 0 25 18.250Z" fill="#fbce16" /><circle cx="25" cy="28.500" r="9.500" fill="#f2f4f6" /><circle cx="25" cy="28.500" r="7.600" fill="#4381ee" /><circle cx="25" cy="56.800" r="2" fill="#000" />
        </svg>
        <!-- Terminal -->
        <svg class="app" viewBox="0 0 50 61">
          <rect x="5.500" y="11" width="39" height="34" rx="2" fill="#8e9193" /><rect x="7" y="12.500" width="36" height="31" rx="1" fill="#1f2021" /><text x="10" y="22.500" class="prompt" font-size="10">&gt;_</text><circle cx="25" cy="56.800" r="2" fill="#000" />
        </svg>
        <!-- Visual Studio Code -->
        <svg class="app" viewBox="0 0 50 61">
          <path d="M34 9L34.500 20.500 11 40.500 6 36.500Z" fill="#1580cc" /><path d="M6 21L11 17.500 34.500 36.500 34 48Z" fill="#1479c0" /><path d="M34 9L44.500 13V44L34 48 32.500 46 34.500 36.500V20.500L32.500 11Z" fill="#249be8" /><circle cx="25" cy="56.800" r="2" fill="#000" />
        </svg>
        <i class="separator"></i>
        <!-- Downloads -->
        <svg class="app" viewBox="0 0 50 61">
          <path d="M13 8L26 6.500 35 17H12z" fill="#f1f2f2" /><path d="M25 6L37 16 33 20 22 16z" fill="#dfe1e2" /><path d="M24 7h3v12h-3z" fill="#4f5356" /><path d="M6 15.500H18L20.500 18H44V45H6z" fill="#63c3ef" /><path d="M6 20H44V45H6z" fill="url(#gFolder)" />
        </svg>
        <!-- Minimised window -->
        <svg class="app" viewBox="0 0 50 61">
          <rect x="4" y="17" width="42.500" height="23" fill="#eff0f1" /><path d="M4 18.500H46M14 22H26M14 25H34M14 28H30M14 31H24M6 22H10" stroke="#d3d6d9" stroke-width=".7" /><g transform="rotate(-5 40 42)"><rect x="33" y="34" width="12" height="14" fill="#fdfdf5" /><rect x="33" y="34" width="12" height="3" fill="#f7d21d" /></g>
        </svg>
        <!-- Trash -->
        <svg class="app" viewBox="0 0 50 61">
          <path d="M9.500 12H40.500L36.500 44Q35.500 48 25 48T13.500 44Z" fill="#d5d7d8" /><path d="M15 16L17 44M21 18L22 46M29 18L28 46M35 16L33 44" stroke="#c8cbcd" stroke-width="1.200" /><ellipse cx="25" cy="13" rx="15.700" ry="4.500" fill="#e7e9ea" /><ellipse cx="25" cy="13" rx="13.500" ry="3.200" fill="#4b5054" /><path d="M13 12L18 7.500 22 11 27 7 30 10 35 8 38 13 30 15 25 13 19 15Z" fill="#e9ebec" /><path d="M17 12L20 10 22 14 18 15zM29 13l3-3 3 3-4 1z" fill="#252a2d" /><path d="M23 12l3-1 1 3h-3z" fill="#3bb0a4" /><path d="M26 9.500l3-.5v2.500z" fill="#e67d35" />
        </svg>
      </div>
    </footer>
  </div>
</template>

<style>
body {
  margin: 0;
  overflow: hidden;
}
</style>

<style scoped>
.desktop {
  width: 1440px;
  height: 900px;
  display: flex;
  flex-direction: column;
  overflow: hidden;
  background: linear-gradient(#1d2b4b 0, #1d2b4b 22px, #262628 24px, #262628 40px, #060d12 60px, #060c11);
  font-family: Inter, "Liberation Sans", sans-serif;
}
.defs {
  width: 0;
  height: 0;
}
svg {
  display: block;
  flex: none;
}
.glyph {
  fill: #fff;
  font-weight: 700;
  text-anchor: middle;
}
.glyph.light {
  font-weight: 500;
}

/* menu bar */
.menubar {
  flex: none;
  height: 22px;
  margin-bottom: 5px;
  box-sizing: border-box;
  padding: 0 22px 0 20px;
  display: flex;
  align-items: center;
  background: linear-gradient(90deg, #cbd8ef, #d0d9eb 45%, #cfd9ec);
  color: #1c2333;
  font-size: 14px;
  line-height: 22px;
}
.apple {
  width: 14px;
  height: 18px;
  margin-right: 20px;
}
.menus {
  display: grid;
  grid-template-columns: 73px 41px 43px 50px 65px 90px 63px 70px 60px;
  letter-spacing: -0.3px;
  font-weight: 500;
}
.menus span:first-child {
  font-weight: 700;
  letter-spacing: 0;
}
.status {
  margin-left: auto;
  display: grid;
  grid-template-columns: 29px 29px 32px 29px 43px 97px 33px 28px 19px;
  align-items: center;
}
.pct {
  font-size: 12px;
  font-weight: 500;
  letter-spacing: -0.6px;
}
.clock {
  font-weight: 500;
  letter-spacing: -0.25px;
}

/* browser window */
.window {
  flex: none;
  height: 810px;
  display: flex;
  flex-direction: column;
  overflow: hidden;
  border-radius: 6px;
  background: #fff;
}
.tabstrip {
  height: 42px;
  display: flex;
  background: #dee1e8;
  color: #3c4043;
  font-size: 12px;
}
.lights {
  display: flex;
  gap: 8px;
  width: 77px;
  padding: 15px 0 0 13px;
}
.lights i {
  width: 12px;
  height: 12px;
  border-radius: 50%;
}
.red {
  background: #fb4843;
}
.amber {
  background: #fdb90c;
}
.green {
  background: #0ccb2b;
}
.tab {
  height: 34px;
  margin-top: 8px;
  box-sizing: border-box;
  display: flex;
  align-items: center;
  line-height: 34px;
}
.tab .title {
  margin-left: 8px;
  flex: 1;
  white-space: nowrap;
  letter-spacing: -0.05px;
}
.tab .fade {
  letter-spacing: -0.1px;
  mask-image: linear-gradient(90deg, #000 88%, transparent 102%);
}
.tab .x {
  margin-left: 8px;
}
.first .x {
  margin-left: 6px;
}
.first {
  width: 228px;
  padding-right: 11px;
  background: linear-gradient(#8f949b, #8f949b) right center / 1px 20px no-repeat;
}
.second {
  width: 238px;
  padding: 0 10px 0 11px;
}
.active {
  width: 240px;
  padding: 0 11px 0 12px;
  border-radius: 8px 8px 0 0;
  background: #fff;
}
.plus {
  margin: 19px 0 0 16px;
}
.toolbar {
  height: 36px;
  box-sizing: border-box;
  display: flex;
  align-items: center;
  padding: 0 19px 0 14px;
  gap: 16px;
}
.omnibox {
  width: 1181px;
  height: 30px;
  margin-left: -3px;
  box-sizing: border-box;
  display: flex;
  align-items: center;
  padding: 0 9px;
  border: 2px solid #a6cefb;
  border-radius: 15px;
  font-size: 14px;
  white-space: nowrap;
}
.scheme,
.url {
  padding-bottom: 1px;
}
.scheme {
  width: 29px;
  margin-left: 8px;
  color: #5f6368;
}
.bar {
  width: 1px;
  height: 16px;
  background: #a9acb0;
}
.url {
  margin-left: 10px;
  color: #1b1b1d;
}
.star {
  margin-left: auto;
}
.ext1 {
  margin-left: -4px;
}
.ext2 {
  margin-left: -2px;
}
.divider {
  width: 1px;
  height: 16px;
  margin-left: -3px;
  background: #c9cccf;
}
.avatar {
  margin-left: -3px;
}
.kebab {
  margin-left: 4px;
}
.bookmarks {
  height: 33px;
  box-sizing: border-box;
  padding: 0 0 5px 14px;
  display: grid;
  grid-template-columns: 69px 154px 80px 78px 71px 116px 66px 96px 129px 78px 85px 154px 222px 20px;
  align-items: center;
  border-bottom: 1px solid #b4b4bd;
  color: #3c4043;
  font-size: 12px;
}
.bookmark {
  display: flex;
  align-items: center;
  gap: 8px;
  white-space: nowrap;
}
.globe,
.jskey,
.jquery,
.mdn {
  letter-spacing: -0.1px;
}
.more {
  font-size: 15px;
}

/* page */
.page {
  flex: 1;
  background:
    linear-gradient(90deg, #fff 10px, transparent 70px, transparent 1370px, #fff 1430px) bottom / 100% 36px no-repeat,
    linear-gradient(transparent, #f5f5f5 55%, #ececec) bottom / 100% 36px no-repeat,
    #fff;
  color: #212529;
}
.hero {
  height: 184px;
  margin-bottom: 16px;
  box-sizing: border-box;
  padding-top: 65px;
  border-radius: 5px;
  background: #1a008e;
  text-align: center;
}
h1,
h2,
h3 {
  margin: 0;
  color: #dfa600;
  font-weight: 600;
}
h1 {
  font-size: 40px;
  line-height: 48px;
  letter-spacing: -2.7px;
  word-spacing: 2px;
  text-indent: -2px;
}
.cards {
  display: flex;
  padding-left: 203px;
}
.card {
  height: 310px;
  box-sizing: border-box;
  border: 1px solid #dfdfdf;
  border-radius: 4px;
  background: #fff;
  box-shadow: 5px 5px 5px 5px #808080;
}
.card.manager {
  width: 274px;
  margin-right: 77px;
}
.card.engineer {
  width: 332px;
  margin-right: 81px;
}
.card.intern {
  width: 266px;
}
.card-head {
  height: 120px;
  box-sizing: border-box;
  padding-top: 13px;
  border-radius: 3px 3px 0 0;
  background: #1a008e;
  text-align: center;
}
h2 {
  font-size: 32px;
  line-height: 39px;
  margin-bottom: 7px;
  letter-spacing: -1.35px;
}
h3 {
  display: flex;
  justify-content: center;
  align-items: center;
  gap: 8px;
  font-size: 28px;
  line-height: 40px;
  letter-spacing: -1.15px;
}
.role {
  width: 28px;
  height: 28px;
}
.role.engineer {
  width: 32px;
}
.role.intern {
  width: 25px;
}
ul {
  margin: 20px;
  padding: 0;
  list-style: none;
  border: 1px solid #dfdfdf;
  border-radius: 4px;
}
li {
  height: 48px;
  padding-left: 20px;
  font-size: 16px;
  line-height: 48px;
  letter-spacing: -0.3px;
  white-space: nowrap;
}
li + li {
  border-top: 1px solid #dfdfdf;
}
a {
  color: #0b66fb;
}
.mail {
  letter-spacing: -0.48px;
}

/* dock */
.dock-area {
  flex: 1;
  display: flex;
  justify-content: center;
  padding-top: 2px;
}
.dock {
  width: 1362px;
  height: 61px;
  box-sizing: border-box;
  padding-left: 3.7px;
  display: grid;
  grid-template-columns: repeat(24, 49.3px) 23px repeat(3, 49.3px);
  border-radius: 5px 5px 0 0;
  background: linear-gradient(90deg, #565c63, #4c555b 22%, #505760 50%, #4c5b61 72%, #575861 86%, #5a515b);
}
.app {
  width: 50px;
  height: 61px;
}
.separator {
  width: 1px;
  height: 45px;
  margin: 8px 0 0 12px;
  background: #353a43;
}
.day {
  fill: #333;
  font-weight: 300;
  text-anchor: middle;
}
.three {
  fill: #42505b;
  text-anchor: middle;
}
.prompt {
  fill: #fff;
  font-family: "Liberation Mono", monospace;
  font-weight: 700;
}
.petal {
  mix-blend-mode: multiply;
  opacity: 0.9;
}
</style>
